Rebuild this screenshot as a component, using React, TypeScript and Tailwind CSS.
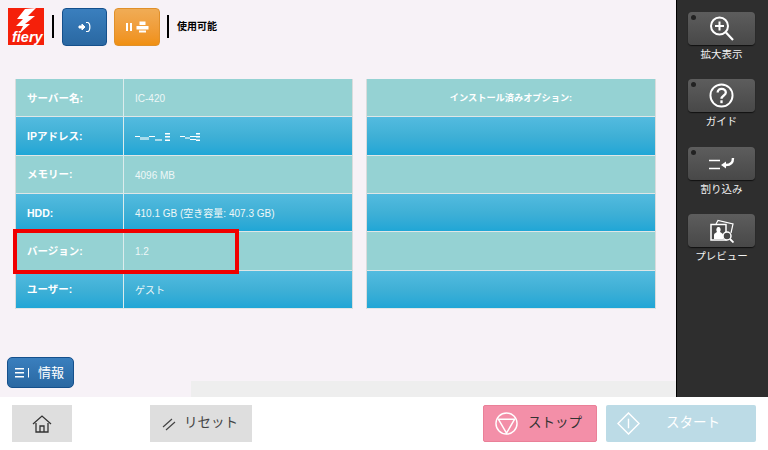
import { ReactNode } from 'react';

const font = { fontFamily: '"Liberation Sans", "Noto Sans CJK JP", sans-serif' };

const serverRows = [
  ['サーバー名:', 'IC-420'],
  ['IPアドレス:', ''],
  ['メモリー:', '4096 MB'],
  ['HDD:', '410.1 GB (空き容量: 407.3 GB)'],
  ['バージョン:', '1.2'],
  ['ユーザー:', 'ゲスト'],
];

const rowBg = (i: number) =>
  i % 2 === 0
    ? 'bg-[#95d2d3]'
    : 'bg-gradient-to-b from-[#53bbdf] via-[#3fb0d6] to-[#1fa6d6]';

function FieryLogo() {
  return (
    <div className="relative w-[36px] h-[37px] bg-[#f5200a] overflow-hidden">
      <svg viewBox="0 0 36 37" className="absolute inset-0 w-full h-full">
        <path d="M17 1 L28 0 L20 8 L27 8 L17 16 L22 16 L11 26 L15 18 L8 18 L15 11 L9 11 Z" fill="#fff" />
      </svg>
      <span className="absolute left-[4px] bottom-[0px] text-[14.5px] leading-[15px] font-bold italic text-white">
        fiery
      </span>
    </div>
  );
}

function SideButton({ label, dot = true, children, gap }: { label: string; dot?: boolean; children: ReactNode; gap: string }) {
  return (
    <div className={`flex flex-col items-center ${gap}`}>
      <div className="relative w-[67px] h-[33px] rounded-[4px] bg-gradient-to-b from-[#5d5d5d] to-[#484848] flex items-center justify-center shadow-[0_1px_1px_#111]">
        {dot && <span className="absolute left-[3px] top-[3px] w-[5px] h-[5px] rounded-full bg-[#222]" />}
        {children}
      </div>
      <span className="mt-[2px] text-[10.5px] leading-[14px] text-[#f2f2f2] whitespace-nowrap">{label}</span>
    </div>
  );
}

export default function App() {
  return (
    <div className="w-[768px] h-[450px] flex flex-col overflow-hidden bg-white" style={font}>
      <div className="h-[397px] flex">
        <main className="relative flex-1 bg-[#f7f2f7] flex flex-col">
          <header className="flex items-center h-[52px] pl-[8px] pt-[1px]">
            <FieryLogo />
            <div className="ml-[8px] w-[2px] h-[23px] bg-black" />
            <button className="ml-[8px] w-[45px] h-[38px] rounded-[4px] border border-[#15508c] bg-gradient-to-b from-[#3a7fbe] to-[#2a68a2] flex items-center justify-center">
              <svg viewBox="0 0 14 12" className="w-[14px] h-[12px]" fill="none">
                <path d="M1 5 H4 V3 L7 6 L4 9 V7 H1 Z" fill="#fff" stroke="#fff" />
                <path d="M8 1.5 H10 C12.5 2.5 12.5 9.5 10 10.5 H8" stroke="#fff" strokeWidth="1.2" />
              </svg>
            </button>
            <button className="ml-[7px] w-[46px] h-[38px] rounded-[4px] border border-[#e0902a] bg-gradient-to-b from-[#f0ac55] to-[#f09010] flex items-center justify-center gap-[4px]">
              <span className="flex gap-[2px]">
                <span className="w-[2px] h-[8px] bg-white" />
                <span className="w-[2px] h-[8px] bg-white" />
              </span>
              <svg viewBox="0 0 13 12" className="w-[13px] h-[12px]" fill="#fff">
                <path d="M3.5 0.5 H9.5 V4 H3.5 Z M0.5 5 H12.5 V8.5 H0.5 Z M3 9.5 H10 V11.5 H3 Z" />
              </svg>
            </button>
            <div className="ml-[7px] w-[2px] h-[23px] bg-black" />
            <span className="ml-[8px] text-[10px] font-bold text-black">使用可能</span>
          </header>

          <section className="flex gap-[13px] ml-[15px] mt-[27px]">
            <div className="w-[338px] border-x border-[#d9dcdc]">
              {serverRows.map(([name, value], i) => (
                <div key={name} className={`flex h-[38.33px] border-b border-[#dfe6e6] ${rowBg(i)}`}>
                  <div className="w-[108px] pl-[11px] pt-[2px] flex items-center border-r border-[#dcecec] text-[10.5px] font-semibold text-white">
                    {name}
                  </div>
                  <div className="flex-1 pl-[11px] pt-[2px] flex items-center text-[10px] text-[#eef7f7]">
                    {i === 1 ? (
                      <svg viewBox="0 0 66 10" className="w-[66px] h-[10px]" fill="#fff">
                        <path d="M0 4 H5 V5 H0 Z M14 4 H20 V5 H14 Z M30 1 H35 V2.5 H30 Z M30 4 H35 V5.5 H30 Z M30 7.5 H35 V9 H30 Z M45 4 H50 V5 H45 Z M55 4 H61 V5 H55 Z M55 7 H61 V8 H55 Z M61 1 H65 V2.5 H61 Z M61 4 H65 V5.5 H61 Z M61 7.5 H65 V9 H61 Z" />
                        <path d="M5 5 H14 V8 H5 Z M20 7 H27 V9 H20 Z M50 5 H55 V7 H50 Z" fill="#a9dcec" />
                      </svg>
                    ) : (
                      value
                    )}
                  </div>
                </div>
              ))}
            </div>

            <div className="w-[290px] border-x border-[#d9dcdc]">
              {serverRows.map(([name], i) => (
                <div key={name} className={`flex items-center justify-center pt-[2px] h-[38.33px] border-b border-[#dfe6e6] text-[9.2px] font-bold text-white ${rowBg(i)}`}>
                  {i === 0 && 'インストール済みオプション:'}
                </div>
              ))}
            </div>
          </section>

          {/* red highlight over the version row */}
          <div className="absolute left-[13px] top-[229px] w-[226px] h-[45px] border-[4px] border-[#f00000]" />

          <button className="absolute left-[7px] top-[357px] w-[67px] h-[31px] rounded-[5px] border border-[#15508c] bg-gradient-to-b from-[#3a7fbe] to-[#2a68a2] flex items-center pl-[7px] text-white">
            <svg viewBox="0 0 14 10" className="w-[14px] h-[10px]" fill="#fff">
              <path d="M0 0 H9 V1.5 H0 Z M0 4 H9 V5.5 H0 Z M0 8 H9 V9.5 H0 Z M13 0 H14 V9.5 H13 Z" />
            </svg>
            <span className="ml-[9px] text-[13px] leading-none">情報</span>
          </button>

          <div className="absolute left-[191px] right-0 bottom-0 h-[16px] bg-[#eeeeee]" />
        </main>

        <aside className="w-[92px] bg-[#2e2e2e] border-l border-black flex flex-col pt-[12px] pr-[2px] items-center">
          <SideButton label="拡大表示" gap="mb-[18px]">
            <svg viewBox="0 0 26 28" className="w-[26px] h-[28px]" fill="none" stroke="#fff">
              <circle cx="10.5" cy="11" r="8.5" strokeWidth="2" />
              <path d="M10.5 6.5 V15.5 M6 11 H15" strokeWidth="2" />
              <path d="M17 17.5 L24 25" strokeWidth="2.2" />
            </svg>
          </SideButton>
          <SideButton label="ガイド" gap="mb-[19px]">
            <svg viewBox="0 0 26 26" className="w-[25px] h-[25px]" fill="none" stroke="#fff">
              <circle cx="13" cy="13" r="11.5" strokeWidth="2" />
              <path d="M9 10 C9 4.5 17.5 5 17.5 10 C17.5 13 13 13 13 16.5" strokeWidth="2.4" />
              <path d="M13 18 V21" strokeWidth="2.4" />
            </svg>
          </SideButton>
          <SideButton label="割り込み" gap="mb-[18px]">
            <svg viewBox="0 0 26 14" className="w-[26px] h-[14px]" fill="none" stroke="#fff">
              <path d="M0 3.5 H11 M0 11.5 H11" strokeWidth="1.6" />
              <path d="M24 1 C24 6 21 8 17 8" strokeWidth="2.4" />
              <path d="M12 8 L17 4.5 V11.5 Z" fill="#fff" stroke="none" />
            </svg>
          </SideButton>
          <SideButton label="プレビュー" dot={false} gap="">
            <svg viewBox="0 0 24 24" className="w-[24px] h-[24px]" fill="none" stroke="#fff">
              <path d="M6 5 L8 1.5 L23 5 L21 14" strokeWidth="1.2" />
              <path d="M1 5.5 H16 V21 H1 Z" fill="#484848" strokeWidth="1.5" />
              <path d="M4 20 V16 C4 14 6 14 7 13 C5.5 10 7 8 8.5 8 C10 8 11.5 10 10 13 C11 14 13 14 13 16 V20 Z" fill="#fff" stroke="none" />
              <circle cx="17" cy="17" r="4" fill="#484848" strokeWidth="1.5" />
              <path d="M20 20 L23.5 23.5" strokeWidth="1.8" />
            </svg>
          </SideButton>
        </aside>
      </div>

      <footer className="flex-1 flex items-start pt-[8px] pl-[12px]">
        <button className="w-[60px] h-[37px] bg-[#dedede] flex items-center justify-center">
          <svg viewBox="0 0 20 20" className="w-[20px] h-[20px]" fill="none" stroke="#333" strokeWidth="1.3">
            <path d="M1 10 L10 2 L19 10" />
            <path d="M4 9 V18 H16 V9" />
            <path d="M8 18 V12 H12 V18" />
          </svg>
        </button>
        <button className="ml-[78px] w-[102px] h-[37px] bg-[#dedede] flex items-center pl-[12px] text-[13.5px] text-[#444]">
          <svg viewBox="0 0 14 14" className="w-[14px] h-[14px]" fill="none" stroke="#444" strokeWidth="1.2">
            <path d="M1 10 L10 2 M4 13 L13 5" />
          </svg>
          <span className="ml-[8px]">リセット</span>
        </button>
        <button className="ml-[231px] w-[114px] h-[37px] rounded-[2px] bg-[#f38fa8] border border-[#ea8098] flex items-center pl-[11px] text-[13.5px] text-[#333]">
          <svg viewBox="0 0 24 24" className="w-[23px] h-[23px]" fill="none" stroke="#fff" strokeWidth="1.5">
            <circle cx="12" cy="12" r="11" />
            <path d="M3.5 7.5 H20.5 L12 22 Z" />
          </svg>
          <span className="ml-[10px]">ストップ</span>
        </button>
        <button className="ml-[9px] w-[150px] h-[37px] rounded-[2px] bg-[#bcdbe6] flex items-center pl-[11px] text-[13.5px] text-white">
          <svg viewBox="0 0 24 24" className="w-[23px] h-[23px]" fill="none" stroke="#fff" strokeWidth="1.5">
            <path d="M12 1 L23 12 L12 23 L1 12 Z" />
            <path d="M12 7 V17" />
          </svg>
          <span className="ml-[26px]">スタート</span>
        </button>
      </footer>
    </div>
  );
}
